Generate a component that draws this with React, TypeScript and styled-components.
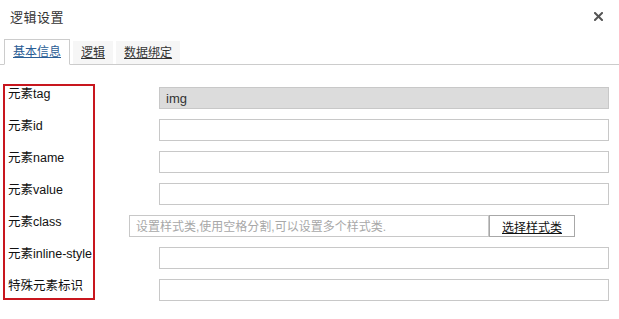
import React from "react";
import styled, { createGlobalStyle } from "styled-components";

const GlobalStyle = createGlobalStyle`
  html, body {
    margin: 0;
    padding: 0;
    background: #ffffff;
  }
  body {
    font-family: "Liberation Sans", Arial, "Noto Sans CJK SC", sans-serif;
    font-size: 12px;
    color: #333333;
  }
`;

const Dialog = styled.div`
  width: 619px;
  height: 319px;
  background: #ffffff;
  position: relative;
  overflow: hidden;
`;

const Header = styled.div`
  display: flex;
  align-items: center;
  justify-content: space-between;
  height: 33px;
  padding: 0 15px 0 10px;
`;

const Title = styled.div`
  font-size: 13px;
  color: #333333;
  letter-spacing: 0.5px;
`;

const CloseButton = styled.button`
  display: flex;
  align-items: center;
  justify-content: center;
  width: 12px;
  height: 12px;
  padding: 0;
  border: none;
  background: transparent;
  cursor: pointer;
`;

const TabBar = styled.div`
  display: flex;
  align-items: flex-end;
  gap: 3px;
  height: 31px;
  padding-left: 4px;
  border-bottom: 1px solid #cccccc;
`;

const Tab = styled.a<{ $active?: boolean }>`
  display: block;
  height: ${({ $active }) => ($active ? "24px" : "23px")};
  line-height: 24px;
  padding: 0 8px;
  margin-bottom: ${({ $active }) => ($active ? "-1px" : "0")};
  font-size: 12px;
  color: ${({ $active }) => ($active ? "#2a5d95" : "#333333")};
  text-decoration: underline;
  background: ${({ $active }) => ($active ? "#ffffff" : "#f6f6f6")};
  border: ${({ $active }) => ($active ? "1px solid #cccccc" : "none")};
  border-bottom: ${({ $active }) => ($active ? "1px solid #ffffff" : "none")};
  cursor: pointer;
`;

const Form = styled.div`
  display: flex;
  align-items: flex-start;
  gap: 34px;
  margin-top: 19px;
  padding-left: 3px;
`;

const LabelBox = styled.div`
  display: flex;
  flex-direction: column;
  gap: 16px;
  width: 85px;
  padding: 0 0 4px 3px;
  border: 2px solid #c8161e;
`;

const Label = styled.div`
  height: 16px;
  line-height: 16px;
  font-size: 12.5px;
  color: #111111;
  white-space: nowrap;
`;

const Fields = styled.div`
  display: flex;
  flex-direction: column;
  gap: 10px;
  padding-top: 3px;
`;

const Row = styled.div<{ $indent?: boolean }>`
  display: flex;
  padding-left: ${({ $indent }) => ($indent ? "30px" : "0")};
`;

const Input = styled.input<{ $width: number }>`
  box-sizing: border-box;
  width: ${({ $width }) => $width}px;
  height: 22px;
  margin: 0;
  padding: 0 6px;
  border: 1px solid #c8c8c8;
  background: #ffffff;
  font-family: "Liberation Sans", Arial, "Noto Sans CJK SC", sans-serif;
  font-size: 13px;
  color: #333333;
  outline: none;

  &:disabled {
    background: #dcdcdc;
    color: #333333;
  }

  &::placeholder {
    font-size: 12px;
    color: #a8a8a8;
  }
`;

const PickButton = styled.button`
  box-sizing: border-box;
  width: 86px;
  height: 22px;
  margin: 0;
  padding: 0;
  border: 1px solid #a8a8a8;
  background: #ffffff;
  font-family: "Liberation Sans", Arial, "Noto Sans CJK SC", sans-serif;
  font-size: 12px;
  color: #111111;
  text-decoration: underline;
  cursor: pointer;
`;

const labels = [
  "元素tag",
  "元素id",
  "元素name",
  "元素value",
  "元素class",
  "元素inline-style",
  "特殊元素标识",
];

const App: React.FC = () => {
  return (
    <>
      <GlobalStyle />
      <Dialog>
        <Header>
          <Title>逻辑设置</Title>
          <CloseButton aria-label="close">
            <svg width="9" height="9" viewBox="0 0 9 9">
              <path
                d="M1 1 L8 8 M8 1 L1 8"
                stroke="#555555"
                strokeWidth="2"
                strokeLinecap="square"
              />
            </svg>
          </CloseButton>
        </Header>
        <TabBar>
          <Tab $active>基本信息</Tab>
          <Tab>逻辑</Tab>
          <Tab>数据绑定</Tab>
        </TabBar>
        <Form>
          <LabelBox>
            {labels.map((l) => (
              <Label key={l}>{l}</Label>
            ))}
          </LabelBox>
          <Fields>
            <Row $indent>
              <Input $width={450} value="img" disabled readOnly />
            </Row>
            <Row $indent>
              <Input $width={450} />
            </Row>
            <Row $indent>
              <Input $width={450} />
            </Row>
            <Row $indent>
              <Input $width={450} />
            </Row>
            <Row>
              <Input
                $width={360}
                placeholder="设置样式类,使用空格分割,可以设置多个样式类."
              />
              <PickButton>选择样式类</PickButton>
            </Row>
            <Row $indent>
              <Input $width={450} />
            </Row>
            <Row $indent>
              <Input $width={450} />
            </Row>
          </Fields>
        </Form>
      </Dialog>
    </>
  );
};

export default App;
